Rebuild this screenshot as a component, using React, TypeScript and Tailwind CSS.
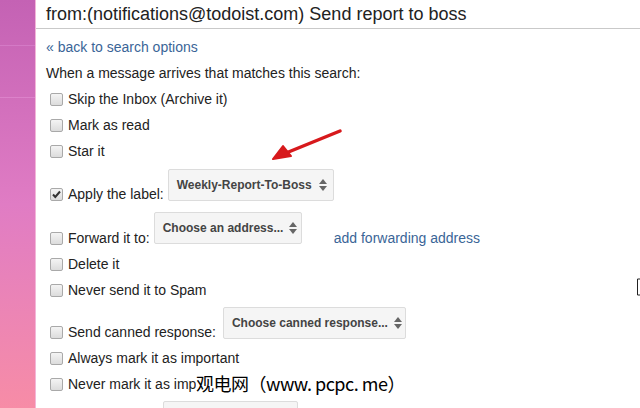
import type { ReactNode } from 'react';

const FONT = { fontFamily: '"Liberation Sans", Arial, sans-serif' };

function Box({ checked = false }: { checked?: boolean }) {
  return (
    <span className="relative inline-block h-[13px] w-[13px] shrink-0 rounded-[2px] border border-[#a9a9a9] bg-gradient-to-b from-[#f4f4f4] to-[#dcdcdc]">
      {checked && (
        <svg viewBox="0 0 13 13" className="absolute left-[-1px] top-[-1px] h-[13px] w-[13px]">
          <path d="M3 6.5 L5.3 9 L10 3.5" fill="none" stroke="#333" strokeWidth="2" />
        </svg>
      )}
    </span>
  );
}

function Arrows() {
  return (
    <svg viewBox="0 0 8 12" className="ml-[6px] h-[12px] w-[8px] shrink-0">
      <path d="M4 0 L8 5 H0 Z" fill="#666" />
      <path d="M4 12 L8 7 H0 Z" fill="#666" />
    </svg>
  );
}

function Select({ label, width }: { label: string; width: string }) {
  return (
    <div
      className={`flex h-[32px] items-center justify-between whitespace-nowrap rounded-[2px] border border-[#dcdcdc] bg-[#f5f5f5] pl-[8px] pr-[6px] text-[12px] font-bold text-[#444] ${width}`}
    >
      <span>{label}</span>
      <Arrows />
    </div>
  );
}

function Row({ children, checked }: { children: ReactNode; checked?: boolean }) {
  return (
    <div className="flex h-[26px] shrink-0 items-center gap-[5px] whitespace-nowrap pl-[14px] text-[14px] text-[#222]">
      <Box checked={checked} />
      <span>{children}</span>
    </div>
  );
}

export default function App() {
  return (
    <div className="relative flex h-[408px] w-[640px] overflow-hidden bg-white" style={FONT}>
      <div className="flex w-[36px] shrink-0 flex-col border-r border-[#f3b6d8] bg-gradient-to-b from-[#c462b4] via-[#e07cc4] to-[#f78ca6]">
        <div className="h-[46px] shrink-0 border-b border-[#d47ac6]" />
        <div className="h-[52px] shrink-0 border-b border-[#dc82ca]" />
      </div>

      <div className="flex min-w-0 flex-1 flex-col">
        <div className="flex h-[29px] shrink-0 items-center whitespace-nowrap border-b border-[#c9c9c9] pl-[10px] text-[18px] text-[#222]">
          from:(notifications@todoist.com) Send report to boss
        </div>
        <div className="mt-[5px] flex h-[26px] shrink-0 items-center pl-[10px] text-[14px] text-[#3a6597]">
          « back to search options
        </div>
        <div className="flex h-[26px] shrink-0 items-center pl-[10px] text-[14px] text-[#222]">
          When a message arrives that matches this search:
        </div>

        <Row>Skip the Inbox (Archive it)</Row>
        <Row>Mark as read</Row>
        <Row>Star it</Row>

        <div className="flex h-[43px] shrink-0 items-end">
          <Row checked>Apply the label:</Row>
          <div className="mb-[6px] ml-[4px]">
            <Select label="Weekly-Report-To-Boss" width="w-[166px]" />
          </div>
        </div>

        <div className="flex h-[44px] shrink-0 items-end">
          <Row>Forward it to:</Row>
          <div className="mb-[7px] ml-[4px]">
            <Select label="Choose an address..." width="w-[148px]" />
          </div>
          <span className="ml-[32px] flex h-[26px] items-center whitespace-nowrap text-[14px] text-[#3a6597]">
            add forwarding address
          </span>
        </div>

        <Row>Delete it</Row>
        <Row>Never send it to Spam</Row>

        <div className="flex h-[42px] shrink-0 items-end">
          <Row>Send canned response:</Row>
          <div className="mb-[6px] ml-[7px]">
            <Select label="Choose canned response..." width="w-[183px]" />
          </div>
        </div>

        <Row>Always mark it as important</Row>
        <Row>Never mark it as important</Row>

        <div className="ml-[127px] mt-[4px] h-[32px] w-[135px] shrink-0 rounded-[2px] border border-[#dcdcdc] bg-[#f5f5f5]" />
      </div>

      <svg viewBox="0 0 640 408" className="pointer-events-none absolute left-0 top-0 h-[408px] w-[640px]">
        <path d="M340 131 L286 153" stroke="#d7191c" strokeWidth="3.5" strokeLinecap="round" />
        <path d="M273 159 L283 146 L291 156 Z" fill="#d7191c" stroke="#d7191c" strokeWidth="2" strokeLinejoin="round" />
        <path d="M640 279 H637.5 V295 H640" fill="none" stroke="#222" strokeWidth="1" />
      </svg>

      <div
        className="absolute left-[196px] top-[371px] bg-white text-[18px] leading-[24px] tracking-[-0.5px] text-black"
        style={{
          fontFamily: '"Noto Sans CJK SC", "DejaVu Sans", sans-serif',
          textShadow: '0 0 2px #fff, 0 0 2px #fff, 0 0 3px #fff',
        }}
      >
        观电网（www. pcpc. me）
      </div>
    </div>
  );
}
